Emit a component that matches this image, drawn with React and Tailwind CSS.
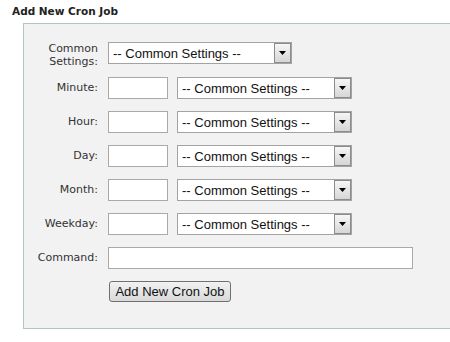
import React from "react";

const labelFont = { fontFamily: '"DejaVu Sans", Verdana, sans-serif' };

const Arrow = () => (
  <div className="w-[17px] h-full border border-[#8c8c8c] bg-gradient-to-b from-[#f6f6f6] to-[#d6d6d6] flex items-center justify-center">
    <svg width="7" height="4" viewBox="0 0 7 4">
      <path d="M0 0h7L3.5 4z" fill="#000" />
    </svg>
  </div>
);

const Select = ({ width }) => (
  <div
    className={`${width} h-[22px] border border-[#a3a3a3] bg-white flex items-stretch font-['Liberation_Sans',Arial,sans-serif] text-[13px] text-[#111]`}
  >
    <span className="flex-1 pl-[4px] flex items-center leading-none">
      -- Common Settings --
    </span>
    <Arrow />
  </div>
);

const Row = ({ label, children }) => (
  <div className="flex items-center h-[22px]">
    <label
      style={labelFont}
      className="w-[74px] text-right text-[11px] text-[#333] mr-[10px]"
    >
      {label}
    </label>
    {children}
  </div>
);

const fields = ["Minute:", "Hour:", "Day:", "Month:", "Weekday:"];

const App = () => {
  return (
    <div className="w-[450px] h-[342px] bg-white overflow-hidden">
      {/* Title */}
      <h2
        style={labelFont}
        className="pl-[12px] pt-[4px] h-[23px] text-[10.5px] leading-[14px] font-bold text-[#222]"
      >
        Add New Cron Job
      </h2>

      {/* Form panel */}
      <div className="ml-[23px] border-l border-t border-b border-[#b3c5bd] bg-[#f2f2f2] pt-[17px] pb-[26px] flex flex-col gap-[12px]">
        <div className="flex items-center h-[24px]">
          <label
            style={labelFont}
            className="w-[74px] text-right text-[11px] leading-[13px] text-[#333] mr-[10px] mt-[4px]"
          >
            Common
            <br />
            Settings:
          </label>
          <Select width="w-[184px]" />
        </div>

        {fields.map((f) => (
          <Row key={f} label={f}>
            <input className="w-[60px] h-[22px] border border-[#a9a9a9] bg-white mr-[9px]" />
            <Select width="w-[175px]" />
          </Row>
        ))}

        <Row label="Command:">
          <input className="w-[305px] h-[22px] border border-[#a9a9a9] bg-white" />
        </Row>

        <div className="flex items-center h-[21px] pl-[85px]">
          <button className="w-[122px] h-[21px] border border-[#707070] rounded-[3px] bg-gradient-to-b from-[#f2f2f2] to-[#d9d9d9] font-['Liberation_Sans',Arial,sans-serif] text-[13px] leading-none text-[#111]">
            Add New Cron Job
          </button>
        </div>
      </div>
    </div>
  );
};

export default App;
